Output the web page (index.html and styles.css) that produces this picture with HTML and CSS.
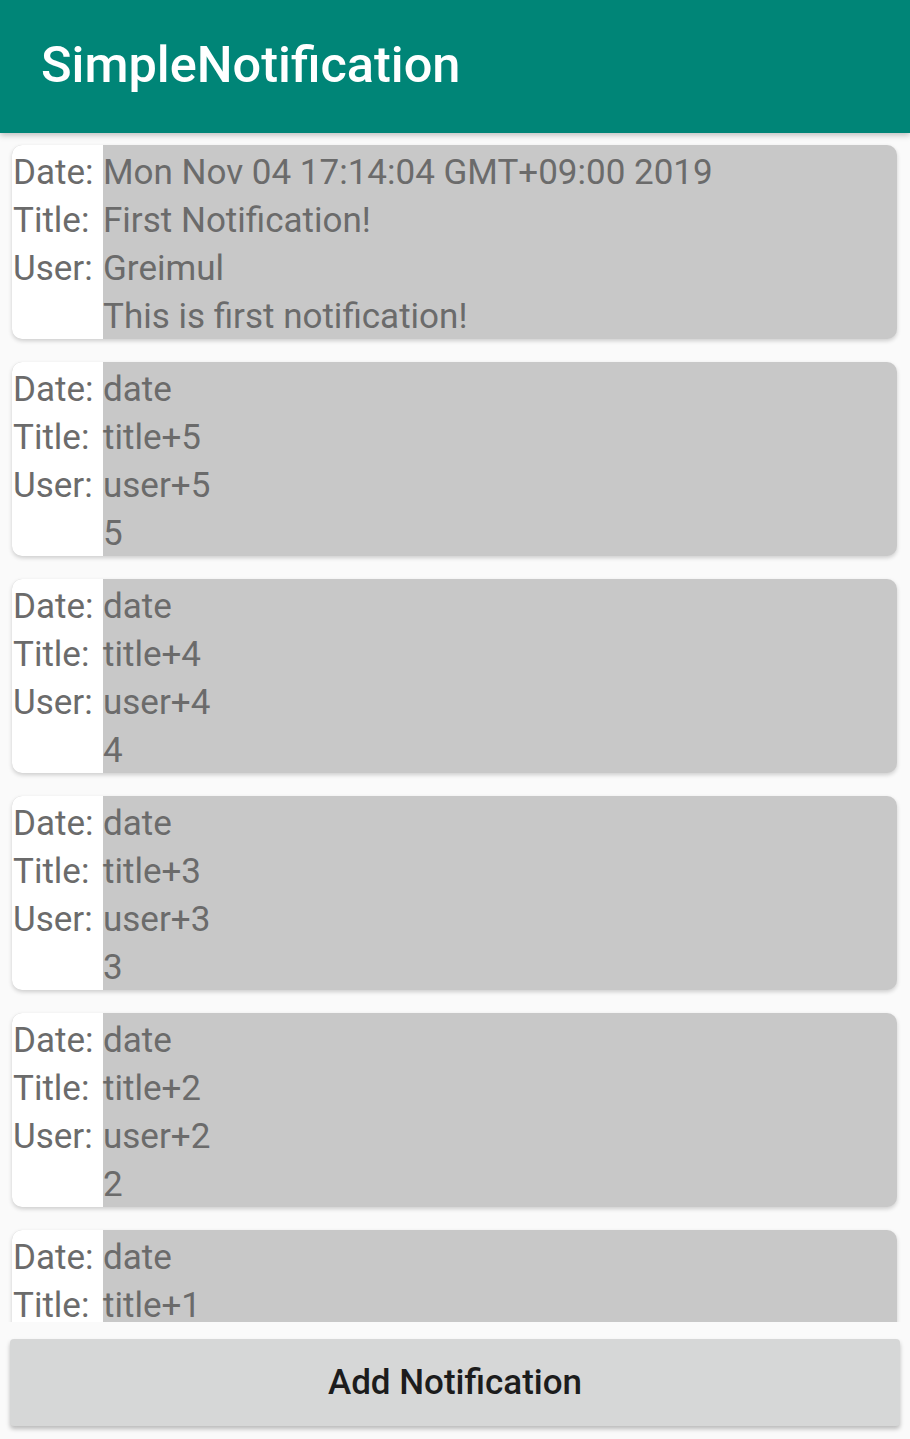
FILE: index.html
```html
<!DOCTYPE html>
<html>
<head>
<meta charset="utf-8">
<link rel="stylesheet" href="styles.css">
</head>
<body>
<div class="app">
  <header class="appbar"><h1 class="appbar-title">SimpleNotification</h1></header>
  <main class="list">
    <div class="card">
      <div class="labels"><div>Date:</div><div>Title:</div><div>User:</div><div></div></div>
      <div class="values"><div>Mon Nov 04 17:14:04 GMT+09:00 2019</div><div>First Notification!</div><div>Greimul</div><div>This is first notification!</div></div>
    </div>
    <div class="card">
      <div class="labels"><div>Date:</div><div>Title:</div><div>User:</div><div></div></div>
      <div class="values"><div>date</div><div>title+5</div><div>user+5</div><div>5</div></div>
    </div>
    <div class="card">
      <div class="labels"><div>Date:</div><div>Title:</div><div>User:</div><div></div></div>
      <div class="values"><div>date</div><div>title+4</div><div>user+4</div><div>4</div></div>
    </div>
    <div class="card">
      <div class="labels"><div>Date:</div><div>Title:</div><div>User:</div><div></div></div>
      <div class="values"><div>date</div><div>title+3</div><div>user+3</div><div>3</div></div>
    </div>
    <div class="card">
      <div class="labels"><div>Date:</div><div>Title:</div><div>User:</div><div></div></div>
      <div class="values"><div>date</div><div>title+2</div><div>user+2</div><div>2</div></div>
    </div>
    <div class="card">
      <div class="labels"><div>Date:</div><div>Title:</div><div>User:</div><div></div></div>
      <div class="values"><div>date</div><div>title+1</div><div>user+1</div><div>1</div></div>
    </div>
  </main>
  <div class="footer"><button class="add-btn">Add Notification</button></div>
</div>
</body>
</html>
```
FILE: styles.css
```css
html, body {
  margin: 0;
  padding: 0;
  background: #fafafa;
}
.app {
  width: 910px;
  height: 1439px;
  display: flex;
  flex-direction: column;
  overflow: hidden;
  font-family: Roboto, "Liberation Sans", sans-serif;
}
.appbar {
  height: 133px;
  flex: 0 0 133px;
  background: #008577;
  display: flex;
  align-items: center;
  padding-left: 41px;
  box-shadow: 0 2px 6px rgba(0,0,0,0.25);
  position: relative;
  z-index: 2;
}
.appbar-title {
  margin: 0;
  color: #fff;
  font-weight: 500;
  font-size: 50.5px;
  letter-spacing: 0;
  position: relative;
  top: -2px;
}
.list {
  height: 1189px;
  flex: 0 0 1189px;
  overflow: hidden;
  padding: 12px 13px 0 12px;
  box-sizing: border-box;
  display: flex;
  flex-direction: column;
  gap: 23px;
}
.card {
  flex: 0 0 194px;
  display: flex;
  border-radius: 10px;
  overflow: hidden;
  box-shadow: 0 2px 4px rgba(0,0,0,0.18);
  background: #c8c8c8;
  font-size: 35px;
  color: #6b6b6b;
  line-height: 48px;
  padding-top: 4px;
  box-sizing: border-box;
}
.labels {
  width: 91px;
  background: #fff;
  padding-left: 1px;
  margin-top: -4px;
  padding-top: 4px;
  box-sizing: border-box;
}
.values {
  flex: 1;
  padding-left: 0;
}
.labels div, .values div {
  height: 48px;
  white-space: nowrap;
}
.footer {
  padding: 17px 10px 0 10px;
}
.add-btn {
  width: 890px;
  height: 87px;
  border: none;
  border-radius: 4px;
  background: #d6d7d7;
  box-shadow: 0 3px 4px rgba(0,0,0,0.25);
  font-family: Roboto, "Liberation Sans", sans-serif;
  font-weight: 500;
  font-size: 35px;
  color: #1c1c1c;
  padding: 0;
}
```
